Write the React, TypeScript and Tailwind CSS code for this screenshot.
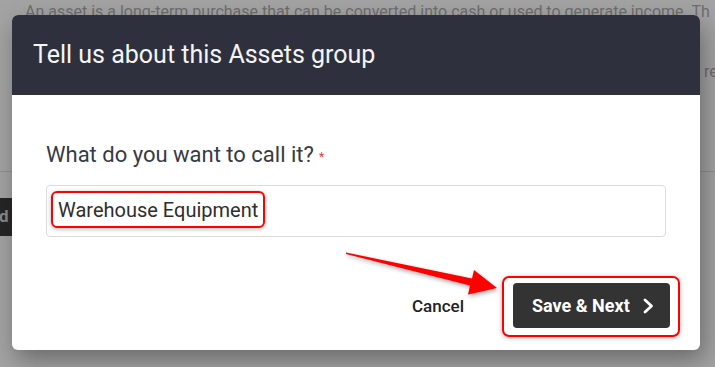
import React from 'react';

const font = { fontFamily: 'Roboto, "Liberation Sans", sans-serif' };

function Arrow() {
  return (
    <svg
      className="absolute left-0 top-0 pointer-events-none"
      width={715}
      height={367}
      viewBox="0 0 715 367"
      style={{ filter: 'drop-shadow(1px 2px 2px rgba(0,0,0,0.35))' }}
    >
      <polygon
        points="346,252.4 472,278.6 474,270 497,288 468,294.5 470,285.4 346,254"
        fill="#ff0000"
      />
    </svg>
  );
}

export default function App() {
  return (
    <div
      className="relative w-[715px] h-[367px] overflow-hidden bg-[#a3a3a3]"
      style={font}
    >
      {/* page behind the overlay */}
      <div className="absolute inset-0">
        <p className="pl-[25px] pt-[2px] text-[16px] leading-[20px] text-[#6e6e6e] whitespace-nowrap">
          An asset is a long-term purchase that can be converted into cash or used to generate income. Th
        </p>
        <p className="pl-[704px] pt-[40px] text-[16px] leading-[20px] text-[#6e6e6e] whitespace-nowrap">
          re
        </p>
        <div className="mt-[89px] h-px bg-[#8f8f8f]" />
        <div className="mt-[26px] w-[12px] h-[38px] bg-[#262626] flex items-center overflow-hidden">
          <span className="text-[17px] font-bold text-[#8a8a8a] -ml-[1px]">d</span>
        </div>
      </div>

      {/* dialog */}
      <div className="absolute left-[12px] top-[15px] w-[688px] h-[335px] bg-white rounded-[6px] shadow-[4px_10px_24px_rgba(0,0,0,0.35)] flex flex-col overflow-hidden">
        <div className="h-[80px] bg-[#2e313d] flex items-center px-[21px]">
          <h2 className="text-[25px] leading-[32px] text-[#f4f4f4] font-normal">
            Tell us about this Assets group
          </h2>
        </div>

        <div className="flex flex-col pt-[46px] px-[34px]">
          <label className="text-[22px] leading-[28px] text-[#363a45]">
            What do you want to call it?
            <span className="text-[#e53935] text-[12px] align-top relative top-[2px] ml-[5px]">*</span>
          </label>

          <div className="mt-[16px] h-[52px] border border-[#dcdcdc] rounded-[4px] pl-[4px] pt-[5px]">
            <span className="inline-flex items-center h-[37px] border-2 border-[#ff0000] rounded-[6px] px-[5px] shadow-[0_1px_4px_rgba(0,0,0,0.3)] text-[20px] text-[#2e2e2e]">
              Warehouse Equipment
            </span>
          </div>
        </div>

        <div className="mt-auto flex items-center justify-end pr-[20px] pb-[13px] gap-[38px]">
          <button className="text-[17px] font-medium text-[#222]">Cancel</button>
          <div className="border-2 border-[#ff0000] rounded-[7px] pl-[9px] pr-[8px] pt-[5px] pb-[7px] shadow-[0_1px_5px_rgba(0,0,0,0.3)]">
            <button className="w-[157px] h-[45px] bg-[#333333] rounded-[4px] flex items-center pl-[19px] pr-[16px] text-white text-[18px] font-bold">
              <span>Save &amp; Next</span>
              <svg className="ml-auto" width="12" height="16" viewBox="0 0 12 16" fill="none">
                <path d="M3 2 L9.5 8 L3 14" stroke="#ffffff" strokeWidth="2.8" strokeLinecap="round" strokeLinejoin="round" />
              </svg>
            </button>
          </div>
        </div>
      </div>

      <Arrow />
    </div>
  );
}
